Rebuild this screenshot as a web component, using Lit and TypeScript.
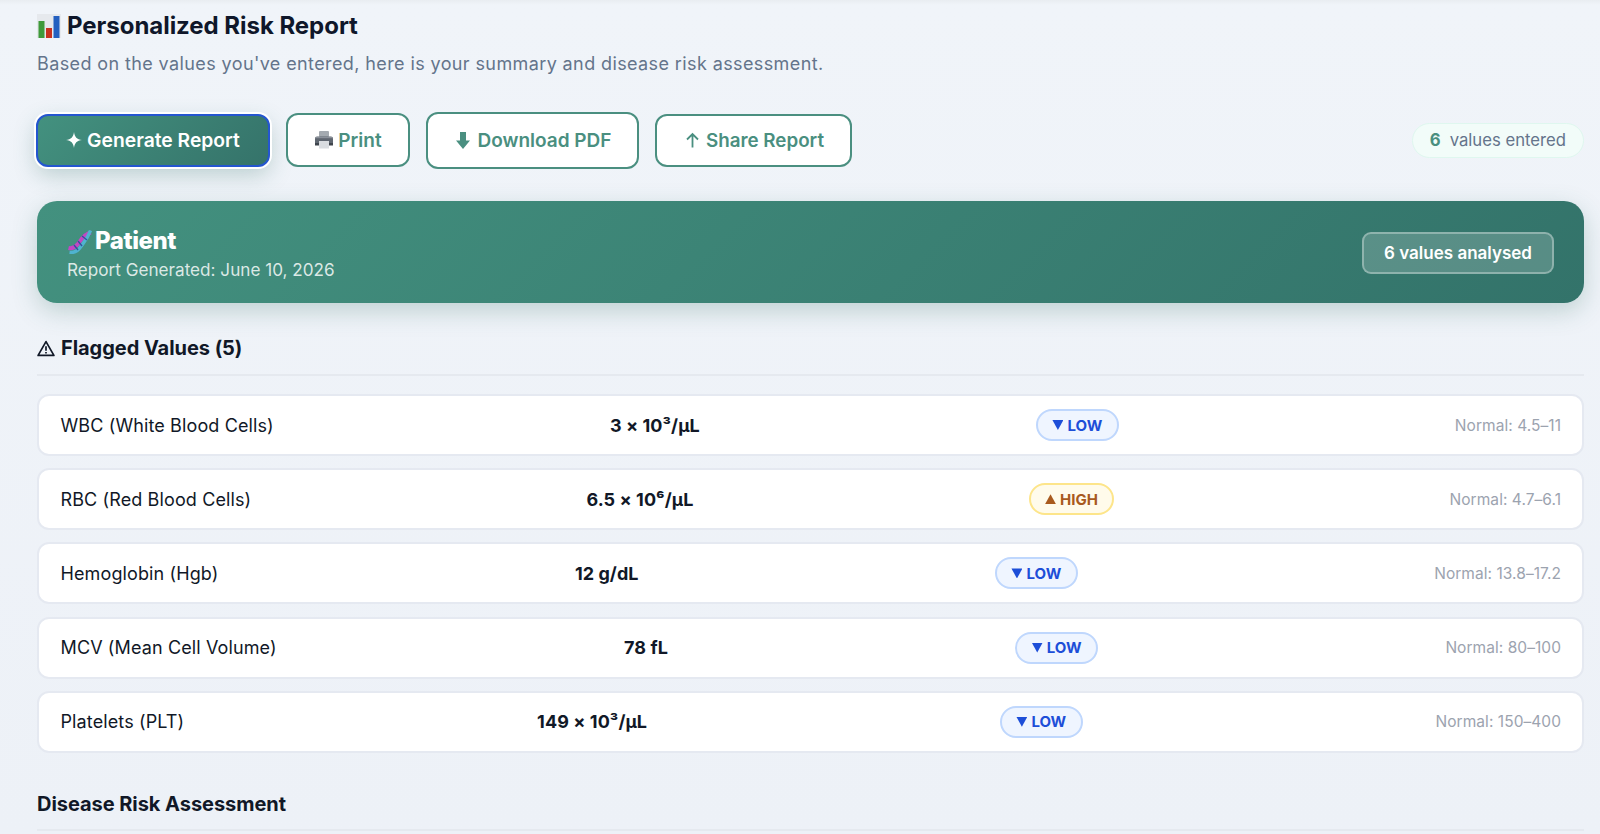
import { LitElement, html, css } from "lit";
import { customElement } from "lit/decorators.js";

const rows = [
  { name: "WBC (White Blood Cells)", val: html`3 × 10³/µL`, st: "low", range: "Normal: 4.5–11" },
  { name: "RBC (Red Blood Cells)", val: html`6.5 × 10⁶/µL`, st: "high", range: "Normal: 4.7–6.1" },
  { name: "Hemoglobin (Hgb)", val: html`12 g/dL`, st: "low", range: "Normal: 13.8–17.2" },
  { name: "MCV (Mean Cell Volume)", val: html`78 fL`, st: "low", range: "Normal: 80–100" },
  { name: "Platelets (PLT)", val: html`149 × 10³/µL`, st: "low", range: "Normal: 150–400" },
];

const chartIcon = html`<svg class="emoji" width="24" height="24" viewBox="0 0 24 24"><rect width="24" height="24" fill="#e6e9ed"/><rect x="1.5" y="7" width="6" height="17" fill="#3f9a3a"/><rect x="9" y="14" width="6" height="10" fill="#c8321f"/><rect x="16.5" y="2" width="6" height="22" fill="#2460c0"/></svg>`;
const printerIcon = html`<svg class="ico" width="20" height="20" viewBox="0 0 20 20"><rect x="5" y="1" width="10" height="6" rx="1" fill="#a4aab0"/><rect x="1" y="6.5" width="18" height="8.5" rx="2" fill="#5f6670"/><rect x="1" y="13" width="18" height="2.5" fill="#3f454d"/><rect x="5" y="11" width="10" height="7.5" fill="#d9dce0"/><rect x="1.5" y="7" width="17" height="1.2" fill="#8a9099"/></svg>`;
const dlIcon = html`<svg class="ico" width="16" height="19" viewBox="0 0 16 19"><path d="M5 1h6v8.5h4L8 18 1 9.5h4z" fill="#4a8f80"/></svg>`;
const upIcon = html`<svg class="ico" width="15" height="17" viewBox="0 0 15 17"><path d="M7.5 15.5V2M2 7.5 7.5 2 13 7.5" fill="none" stroke="#4a8f80" stroke-width="1.8"/></svg>`;
const dnaIcon = html`<svg class="ico" width="25" height="26" viewBox="0 0 25 26">
  <path d="M1.5 20C6 21 8.5 19 11 16 14 12 17 6 24 4.5" fill="none" stroke="#c246c4" stroke-width="4"/>
  <path d="M2.5 24.5C8 25 11.5 22 13.5 19 16 15 20 12 23.5 2.5" fill="none" stroke="#4fb3d0" stroke-width="3.4"/>
  <path d="M7 17l4 5M11 13l4 5M15 8l5 4" stroke="#35509c" stroke-width="1.4"/></svg>`;
const warnIcon = html`<svg class="ico" width="18" height="17" viewBox="0 0 18 17"><path d="M9 1.6 16.9 15.4H1.1z" fill="none" stroke="#111827" stroke-width="1.7" stroke-linejoin="round"/><path d="M9 6.2v4.6M9 12v1.6" stroke="#111827" stroke-width="1.7"/></svg>`;
const sparkIcon = html`<svg class="ico" width="16" height="16" viewBox="0 0 15 15"><path d="M7.5 0C8.1 4.8 10.2 6.9 15 7.5 10.2 8.1 8.1 10.2 7.5 15 6.9 10.2 4.8 8.1 0 7.5 4.8 6.9 6.9 4.8 7.5 0z" fill="#fff"/></svg>`;

@customElement("app-root")
export class AppRoot extends LitElement {
  static styles = css`
    :host {
      display: block;
      height: 834px;
      overflow: hidden;
      box-sizing: border-box;
      font-family: Inter, "Liberation Sans", sans-serif;
      color: #111827;
      background: linear-gradient(180deg, #e9edf1 0, #f0f4f9 5px, #edf1f7 100%);
      padding: 0 16px 0 37px;
    }
    .emoji, .ico { flex: none; display: block; }
    .title {
      margin: 0;
      padding-top: 11px;
      display: flex;
      align-items: center;
      gap: 6px;
      font-size: 24px;
      line-height: 29px;
      font-weight: 700;
      letter-spacing: -0.04px;
      color: #0f172a;
    }
    .sub {
      margin: 11px 0 0;
      font-size: 18px;
      line-height: 26px;
      color: #64748b;
      letter-spacing: 0.39px;
    }
    .actions {
      display: flex;
      align-items: center;
      gap: 16px;
      margin-top: 35px;
      height: 56px;
    }
    .btn {
      display: flex;
      align-items: center;
      justify-content: center;
      gap: 6px;
      box-sizing: border-box;
      font-size: 19px;
      font-weight: 600;
      color: #4a8f80;
      background: #fff;
      border: 2px solid #4a8f80;
      border-radius: 12px;
    }
    .primary {
      width: 234px;
      height: 53px;
      margin-left: -1px;
      gap: 5px;
      font-size: 19.3px;
      color: #fff;
      border-color: #2456d0;
      background: linear-gradient(135deg, #43917f, #35736a);
      box-shadow: 0 0 0 2px #fff, 0 8px 22px rgba(52, 112, 100, 0.28);
    }
    .print { width: 124px; height: 54px; gap: 4px; }
    .dl { width: 213px; height: 57px; padding-left: 2px; }
    .share { width: 197px; height: 53px; font-size: 18.8px; padding-left: 2px; }
    .spacer { flex: 1; }
    .pill {
      display: flex;
      align-items: center;
      gap: 9px;
      box-sizing: border-box;
      height: 35px;
      padding: 0 17px;
      border-radius: 18px;
      border: 1px solid #dff7ef;
      background: #f2fcf9;
      font-size: 16.7px;
      color: #64748b;
    }
    .pill b { color: #4a8f80; font-weight: 700; }
    .banner {
      margin-top: 33px;
      height: 102px;
      box-sizing: border-box;
      padding: 0 30px;
      border-radius: 20px;
      display: flex;
      align-items: center;
      justify-content: space-between;
      color: #fff;
      background: linear-gradient(135deg, #43917f, #33736a 100%);
      box-shadow: 0 8px 24px rgba(52, 112, 100, 0.25);
    }
    .who { padding-top: 3px; }
    .pt { display: flex; align-items: center; gap: 3px; font-size: 24px; line-height: 30px; font-weight: 800; letter-spacing: -0.45px; }
    .gen { font-size: 17.15px; line-height: 22px; margin-top: 3px; color: rgba(255, 255, 255, 0.82); }
    .an {
      box-sizing: border-box;
      height: 42px;
      width: 192px;
      display: flex;
      align-items: center;
      justify-content: center;
      font-size: 17px;
      font-weight: 600;
      margin-top: 2px;
      border-radius: 9px;
      background: rgba(255, 255, 255, 0.18);
      border: 2px solid rgba(255, 255, 255, 0.32);
    }
    .section {
      margin: 30px 0 0;
      display: flex;
      align-items: center;
      gap: 6px;
      font-size: 20px;
      line-height: 30px;
      font-weight: 700;
      letter-spacing: -0.05px;
      color: #111827;
      padding-bottom: 11px;
      border-bottom: 2px solid #e5e9ef;
    }
    .rows { display: flex; flex-direction: column; gap: 12.2px; margin-top: 18px; }
    .row {
      box-sizing: border-box;
      height: 62px;
      display: flex;
      align-items: center;
      justify-content: space-between;
      padding: 0 21px 0 21.5px;
      background: #fff;
      border: 2px solid #e5e9f1;
      border-radius: 12px;
      font-size: 18px;
    }
    .name { letter-spacing: 0.12px; font-weight: 400; }
    .val { font-weight: 700; letter-spacing: 0.06px; }
    .badge {
      box-sizing: border-box;
      height: 32px;
      padding: 0 14.5px;
      display: flex;
      align-items: center;
      gap: 4px;
      border-radius: 16px;
      border: 2px solid;
      font-size: 15px;
      font-weight: 700;
    }
    .low { color: #1d4ed8; background: #eff5ff; border-color: #bfd7fd; }
    .high { color: #a85a1e; background: #fffbeb; border-color: #fde58a; }
    .tri { width: 11px; height: 10px; flex: none; background: currentColor; }
    .low .tri { clip-path: polygon(0 0, 100% 0, 50% 100%); }
    .high .tri { clip-path: polygon(50% 0, 100% 100%, 0 100%); }
    .range { font-size: 15.5px; color: #9ca3af; letter-spacing: 0.05px; }
    .section2 { margin-top: 36px; padding-bottom: 10px; }
  `;

  render() {
    return html`
      <h1 class="title">${chartIcon}Personalized Risk Report</h1>
      <p class="sub">Based on the values you've entered, here is your summary and disease risk assessment.</p>
      <div class="actions">
        <div class="btn primary">${sparkIcon}Generate Report</div>
        <div class="btn print">${printerIcon}Print</div>
        <div class="btn dl">${dlIcon}Download PDF</div>
        <div class="btn share">${upIcon}Share Report</div>
        <div class="spacer"></div>
        <div class="pill"><b>6</b> values entered</div>
      </div>
      <div class="banner">
        <div class="who">
          <div class="pt">${dnaIcon}Patient</div>
          <div class="gen">Report Generated: June 10, 2026</div>
        </div>
        <div class="an">6 values analysed</div>
      </div>
      <h2 class="section">${warnIcon}Flagged Values (5)</h2>
      <div class="rows">
        ${rows.map(
          (r) => html`<div class="row">
            <span class="name">${r.name}</span>
            <span class="val">${r.val}</span>
            <span class="badge ${r.st}"><i class="tri"></i>${r.st.toUpperCase()}</span>
            <span class="range">${r.range}</span>
          </div>`
        )}
      </div>
      <h2 class="section section2">Disease Risk Assessment</h2>
    `;
  }
}
